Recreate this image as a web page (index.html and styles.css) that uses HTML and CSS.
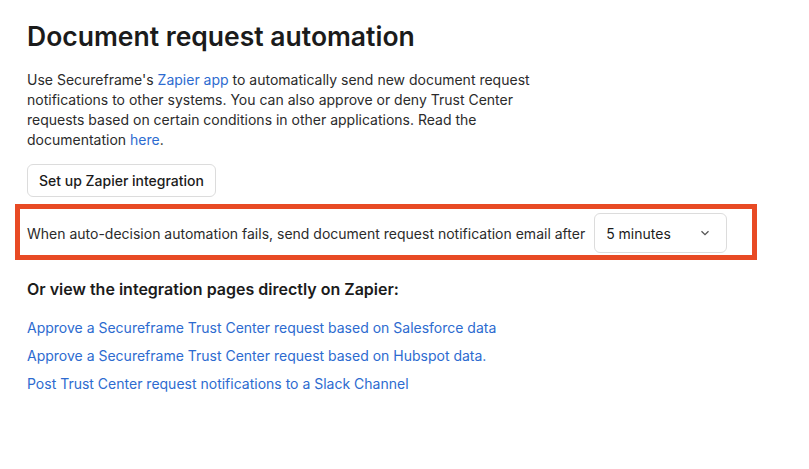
FILE: index.html
```html
<!DOCTYPE html>
<html lang="en">
<head>
    <meta charset="UTF-8">
    <meta name="viewport" content="width=device-width, initial-scale=1.0">
    <title>Document request automation</title>
    <link rel="stylesheet" href="styles.css">
</head>
<body>
    <div class="page">
        <h1>Document request automation</h1>

        <p class="intro">
            Use Secureframe's <a href="#">Zapier app</a> to automatically send new document request
            notifications to other systems. You can also approve or deny Trust Center
            requests based on certain conditions in other applications. Read the
            documentation <a href="#">here</a>.
        </p>

        <button class="btn">Set up Zapier integration</button>

        <div class="highlight">
            <div class="delay-row">
                <span>When auto-decision automation fails, send document request notification email after</span>
                <div class="select">
                    <span>5 minutes</span>
                    <svg class="chevron" width="10" height="6" viewBox="0 0 10 6">
                        <path d="M1.5 1.2 L5 4.6 L8.5 1.2" fill="none" stroke="#555" stroke-width="1.3"/>
                    </svg>
                </div>
            </div>
        </div>

        <h3>Or view the integration pages directly on Zapier:</h3>

        <ul class="links">
            <li><a href="#">Approve a Secureframe Trust Center request based on Salesforce data</a></li>
            <li><a href="#">Approve a Secureframe Trust Center request based on Hubspot data.</a></li>
            <li><a href="#">Post Trust Center request notifications to a Slack Channel</a></li>
        </ul>
    </div>
</body>
</html>
```

FILE: styles.css
```css
body {
    margin: 0;
    font-family: Inter, "Noto Sans", sans-serif;
    color: #1b1b1b;
    background: #fff;
}
.page {
    padding: 20px 0 0 27px;
    width: 740px;
}
h1 {
    font-size: 26.5px;
    font-weight: 600;
    margin: 0 0 18px;
    line-height: 32px;
}
.intro {
    font-size: 14px;
    line-height: 20px;
    color: #2b2b2b;
    width: 520px;
    margin: 0 0 14px;
}
a {
    color: #2d6bd0;
    text-decoration: none;
}
.btn {
    font-family: inherit;
    font-size: 14px;
    font-weight: 500;
    color: #1b1b1b;
    background: #fff;
    border: 1px solid #dcdcdc;
    border-radius: 6px;
    height: 33px;
    padding: 0 11px;
    display: block;
}
.highlight {
    margin: 7px 0 0 -12px;
    border: 5px solid #e84a24;
    width: 732px;
}
.delay-row {
    display: flex;
    align-items: center;
    gap: 9px;
    padding: 4px 0 2px 7px;
    font-size: 14px;
    color: #2b2b2b;
}
.select {
    border: 1px solid #dcdcdc;
    border-radius: 6px;
    display: flex;
    align-items: center;
    justify-content: space-between;
    padding: 0 16px 0 11px;
    box-sizing: border-box;
    width: 133px;
    height: 40px;
    color: #1b1b1b;
}
h3 {
    font-size: 16px;
    font-weight: 600;
    margin: 17px 0 17px;
    line-height: 24px;
}
.links {
    list-style: none;
    padding: 0;
    margin: 0;
    font-size: 14px;
}
.links li {
    line-height: 20px;
    margin-bottom: 8px;
}
```
